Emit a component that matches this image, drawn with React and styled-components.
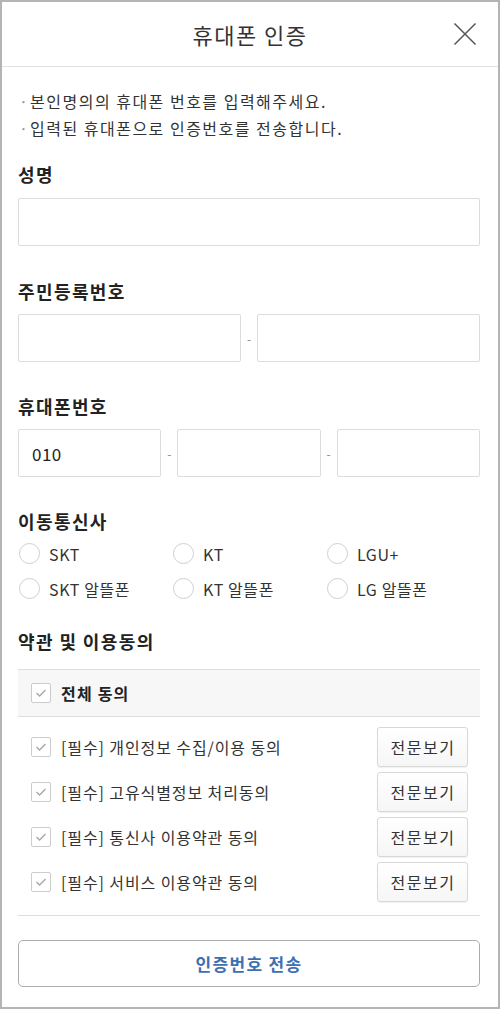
import React from 'react';
import styled, { createGlobalStyle } from 'styled-components';

const GlobalStyle = createGlobalStyle`
  html, body {
    margin: 0;
    padding: 0;
    background: #ffffff;
  }
  * {
    box-sizing: border-box;
  }
  body {
    font-family: "Noto Sans CJK KR", "Noto Sans", sans-serif;
    color: #333333;
  }
`;

const Page = styled.div`
  width: 500px;
  min-height: 1009px;
  border: 2px solid #b4b4b4;
  background: #ffffff;
  display: flex;
  flex-direction: column;
`;

const Header = styled.header`
  position: relative;
  height: 65px;
  border-bottom: 1px solid #e2e2e2;
  display: flex;
  align-items: center;
  justify-content: center;
`;

const Title = styled.h1`
  margin: 0;
  font-size: 22px;
  font-weight: 400;
  color: #333333;
  letter-spacing: 1.5px;
`;

const CloseButton = styled.button`
  position: absolute;
  right: 20px;
  top: 19px;
  width: 26px;
  height: 26px;
  padding: 0;
  border: 0;
  background: none;
  display: flex;
  align-items: center;
  justify-content: center;
`;

const Body = styled.main`
  padding: 21px 18px 20px 16px;
  display: flex;
  flex-direction: column;
`;

const Notice = styled.ul`
  margin: 0 0 20px;
  padding: 0;
  list-style: none;
`;

const NoticeItem = styled.li`
  position: relative;
  padding-left: 12px;
  font-size: 16px;
  line-height: 27px;
  letter-spacing: 1.5px;
  color: #333333;

  &::before {
    content: '·';
    position: absolute;
    left: 1px;
    top: 0;
    color: #999999;
  }
`;

const Label = styled.h2`
  margin: 0 0 ${p => p.$gap ?? 10}px;
  font-size: 18px;
  line-height: 24px;
  font-weight: 700;
  letter-spacing: 1.4px;
  color: #222222;
`;

const Field = styled.section`
  margin-bottom: ${p => p.$after ?? 32}px;
`;

const Input = styled.input`
  display: block;
  width: 100%;
  height: 48px;
  border: 1px solid #dcdcdc;
  border-radius: 2px;
  padding: 0 13px;
  font-family: inherit;
  font-size: 17px;
  letter-spacing: 0.5px;
  color: #222222;
  background: #ffffff;
  outline: none;
`;

const SplitRow = styled.div`
  display: grid;
  grid-template-columns: ${p => p.$cols};
  align-items: center;
`;

const Dash = styled.span`
  text-align: center;
  font-size: 12px;
  color: #888888;
`;

const RadioGrid = styled.div`
  display: grid;
  grid-template-columns: repeat(3, 1fr);
  grid-auto-rows: 35px;
  margin-top: -7px;
`;

const RadioLabel = styled.label`
  display: flex;
  align-items: center;
  gap: 9px;
  font-size: 16px;
  letter-spacing: 0.6px;
  color: #333333;
  padding-left: 1px;
`;

const RadioCircle = styled.span`
  width: 21px;
  height: 21px;
  border-radius: 50%;
  border: 1px solid #cfcfcf;
  background: #ffffff;
  flex: none;
`;

const AgreeAll = styled.div`
  height: 48px;
  border-top: 1px solid #dddddd;
  border-bottom: 1px solid #dddddd;
  background: #f7f7f7;
  display: flex;
  align-items: center;
  gap: 10px;
  padding-left: 13px;
  font-size: 16px;
  font-weight: 700;
  letter-spacing: 1.2px;
  color: #222222;
`;

const AgreeList = styled.ul`
  margin: 0;
  padding: 10px 12px 13px 13px;
  list-style: none;
  border-bottom: 1px solid #dddddd;
  display: flex;
  flex-direction: column;
  gap: 5px;
`;

const AgreeRow = styled.li`
  height: 40px;
  display: flex;
  align-items: center;
  gap: 10px;
  font-size: 16px;
  letter-spacing: 0.9px;
  color: #333333;
`;

const AgreeText = styled.span`
  flex: 1;
`;

const Box = styled.span`
  width: 20px;
  height: 20px;
  border: 1px solid #cccccc;
  border-radius: 2px;
  background: #ffffff;
  flex: none;
  display: flex;
  align-items: center;
  justify-content: center;
`;

const ViewButton = styled.button`
  width: 91px;
  height: 40px;
  border: 1px solid #d8d8d8;
  border-radius: 3px;
  background: linear-gradient(#ffffff, #f6f6f6);
  box-shadow: 0 1px 1px rgba(0, 0, 0, 0.06);
  font-family: inherit;
  font-size: 16px;
  letter-spacing: 1.5px;
  color: #333333;
  padding: 0 0 0 1px;
`;

const SubmitButton = styled.button`
  margin-top: 24px;
  height: 47px;
  width: 100%;
  border: 1px solid #a9adb1;
  border-radius: 5px;
  background: #ffffff;
  font-family: inherit;
  font-size: 17px;
  font-weight: 700;
  letter-spacing: 1.3px;
  color: #3f6fb3;
`;

const Check = () => (
  <Box>
    <svg width="12" height="10" viewBox="0 0 12 10" fill="none">
      <path d="M1.5 5 L4.6 8 L10.5 2" stroke="#a8a8a8" strokeWidth="1.4" />
    </svg>
  </Box>
);

const carriers = ['SKT', 'KT', 'LGU+', 'SKT 알뜰폰', 'KT 알뜰폰', 'LG 알뜰폰'];

const terms = [
  '[필수] 개인정보 수집/이용 동의',
  '[필수] 고유식별정보 처리동의',
  '[필수] 통신사 이용약관 동의',
  '[필수] 서비스 이용약관 동의',
];

const App = () => {
  return (
    <Page>
      <GlobalStyle />
      <Header>
        <Title>휴대폰 인증</Title>
        <CloseButton aria-label="닫기">
          <svg width="24" height="24" viewBox="0 0 24 24" fill="none">
            <path d="M1.5 1.5 L22.5 22.5 M22.5 1.5 L1.5 22.5" stroke="#555555" strokeWidth="1.5" />
          </svg>
        </CloseButton>
      </Header>

      <Body>
        <Notice>
          <NoticeItem>본인명의의 휴대폰 번호를 입력해주세요.</NoticeItem>
          <NoticeItem>입력된 휴대폰으로 인증번호를 전송합니다.</NoticeItem>
        </Notice>

        <Field $after={33}>
          <Label $gap={12}>성명</Label>
          <Input type="text" />
        </Field>

        <Field>
          <Label $gap={11}>주민등록번호</Label>
          <SplitRow $cols="1fr 16px 1fr">
            <Input type="text" />
            <Dash>-</Dash>
            <Input type="password" />
          </SplitRow>
        </Field>

        <Field>
          <Label $gap={11}>휴대폰번호</Label>
          <SplitRow $cols="1fr 16px 1fr 16px 1fr">
            <Input type="tel" defaultValue="010" />
            <Dash>-</Dash>
            <Input type="tel" />
            <Dash>-</Dash>
            <Input type="tel" />
          </SplitRow>
        </Field>

        <Field $after={23}>
          <Label>이동통신사</Label>
          <RadioGrid>
            {carriers.map(c => (
              <RadioLabel key={c}>
                <RadioCircle />
                {c}
              </RadioLabel>
            ))}
          </RadioGrid>
        </Field>

        <Label $gap={16}>약관 및 이용동의</Label>
        <AgreeAll>
          <Check />
          전체 동의
        </AgreeAll>
        <AgreeList>
          {terms.map(t => (
            <AgreeRow key={t}>
              <Check />
              <AgreeText>{t}</AgreeText>
              <ViewButton>전문보기</ViewButton>
            </AgreeRow>
          ))}
        </AgreeList>

        <SubmitButton>인증번호 전송</SubmitButton>
      </Body>
    </Page>
  );
};

export default App;
